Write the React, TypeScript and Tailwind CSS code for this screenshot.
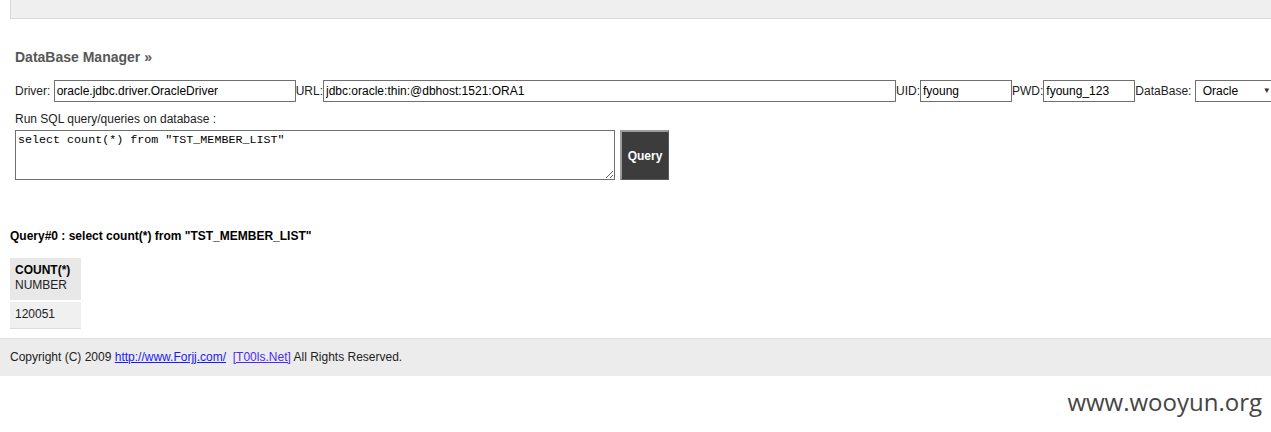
import React from 'react';

const labelCls = 'shrink-0 text-[#222]';
const inputCls =
  'shrink-0 h-[22px] border border-[#707070] bg-white px-[2px] text-[12px] leading-[20px] text-black outline-none';

export default function App() {
  return (
    <div className="relative w-[1271px] h-[432px] overflow-hidden bg-white font-['Liberation_Sans',Arial,sans-serif] text-[12px] text-[#222]">
      {/* top bar */}
      <div className="ml-[10px] h-[19px] bg-[#efefef] border-l border-b border-[#d9d9d9]" />

      {/* manager */}
      <div className="pl-[15px]">
        <h2 className="mt-[30px] text-[14px] leading-[16px] font-bold text-[#575757]">
          DataBase Manager »
        </h2>

        <div className="mt-[15px] flex w-max items-center whitespace-nowrap">
          <span className={labelCls}>Driver:&nbsp;</span>
          <input className={`${inputCls} w-[242px]`} defaultValue="oracle.jdbc.driver.OracleDriver" />
          <span className={labelCls}>URL:</span>
          <input className={`${inputCls} w-[573px]`} defaultValue="jdbc:oracle:thin:@dbhost:1521:ORA1" />
          <span className={labelCls}>UID:</span>
          <input className={`${inputCls} w-[92px]`} defaultValue="fyoung" />
          <span className={labelCls}>PWD:</span>
          <input className={`${inputCls} w-[92px]`} defaultValue="fyoung_123" />
          <span className={labelCls}>DataBase:&nbsp;</span>
          <div className="flex h-[22px] w-[90px] shrink-0 items-center border border-[#707070] pl-[7px] pr-[13px] text-black">
            <span>Oracle</span>
            <span className="ml-auto text-[8px] text-[#333]">▼</span>
          </div>
        </div>

        <div className="mt-[10px] leading-[14px]">Run SQL query/queries on database :</div>
        <div className="mt-[4px] flex items-start gap-[5px]">
          <textarea
            className="block h-[50px] w-[600px] border border-[#707070] px-[2px] pt-[2px] font-['Liberation_Mono','Courier_New',monospace] text-[11.7px] leading-[14px] text-black outline-none"
            defaultValue={'select count(*) from "TST_MEMBER_LIST"'}
          />
          <button className="h-[50px] w-[49px] border-l-2 border-t-2 border-r border-b border-l-[#9c9c9c] border-t-[#9c9c9c] border-r-[#5a5a5a] border-b-[#5a5a5a] bg-[#3c3c3c] text-[12px] font-bold text-white">
            Query
          </button>
        </div>
      </div>

      {/* result */}
      <div className="pl-[10px]">
        <div className="mt-[49px] text-[12px] leading-[14px] font-bold text-black">
          Query#0 : select count(*) from "TST_MEMBER_LIST"
        </div>
        <div className="mt-[15px] w-[71px]">
          <div className="bg-[#e8e8e8] pl-[5px] pt-[5px] pb-[7px] leading-[15px]">
            <div className="font-bold text-black">COUNT(*)</div>
            <div className="text-[#222]">NUMBER</div>
          </div>
          <div className="mt-[2px] bg-[#f0f0f0] border-b border-[#dcdcdc] pl-[5px] pt-[5px] pb-[6px] leading-[15px] text-[#222]">
            120051
          </div>
        </div>
      </div>

      {/* footer */}
      <div className="mt-[9px] h-[38px] border-t border-[#e0e0e0] bg-[#ececec] pl-[10px] pt-[11px] leading-[15px] text-[#222]">
        Copyright (C) 2009{' '}
        <a href="#" className="text-[#1a1aff] underline">
          http://www.Forjj.com/
        </a>
        &nbsp;{' '}
        <a href="#" className="text-[#4b2bff] underline">
          [T00ls.Net]
        </a>{' '}
        All Rights Reserved.
      </div>

      {/* watermark */}
      <div className="absolute right-[9px] top-[386px] font-['Open_Sans','Noto_Sans',sans-serif] text-[24px] leading-[32px] text-[#454545]">
        www.wooyun.org
      </div>
    </div>
  );
}
